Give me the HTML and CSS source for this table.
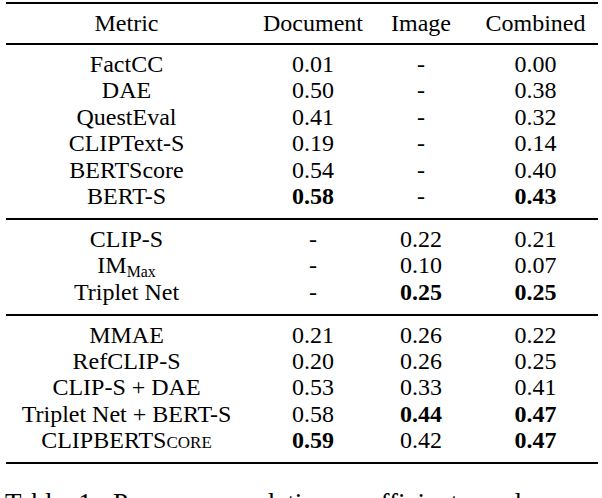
FILE: index.html
```html
<!DOCTYPE html>
<html>
<head>
<meta charset="utf-8">
<link rel="stylesheet" href="styles.css">
</head>
<body>
<div class="tbl">
  <div class="sec head">
    <div>Metric</div><div>Document</div><div>Image</div><div class="c4">Combined</div>
  </div>
  <div class="sec">
    <div>FactCC</div><div>0.01</div><div>-</div><div class="c4">0.00</div>
    <div>DAE</div><div>0.50</div><div>-</div><div class="c4">0.38</div>
    <div>QuestEval</div><div>0.41</div><div>-</div><div class="c4">0.32</div>
    <div>CLIPText-S</div><div>0.19</div><div>-</div><div class="c4">0.14</div>
    <div>BERTScore</div><div>0.54</div><div>-</div><div class="c4">0.40</div>
    <div>BERT-S</div><div><b>0.58</b></div><div>-</div><div class="c4"><b>0.43</b></div>
  </div>
  <div class="sec">
    <div>CLIP-S</div><div>-</div><div>0.22</div><div class="c4">0.21</div>
    <div>IM<sub>Max</sub></div><div>-</div><div>0.10</div><div class="c4">0.07</div>
    <div>Triplet Net</div><div>-</div><div><b>0.25</b></div><div class="c4"><b>0.25</b></div>
  </div>
  <div class="sec">
    <div>MMAE</div><div>0.21</div><div>0.26</div><div class="c4">0.22</div>
    <div>RefCLIP-S</div><div>0.20</div><div>0.26</div><div class="c4">0.25</div>
    <div>CLIP-S + DAE</div><div>0.53</div><div>0.33</div><div class="c4">0.41</div>
    <div>Triplet Net + BERT-S</div><div>0.58</div><div><b>0.44</b></div><div class="c4"><b>0.47</b></div>
    <div><span class="sc">CLIPBERTScore</span></div><div><b>0.59</b></div><div>0.42</div><div class="c4"><b>0.47</b></div>
  </div>
</div>
<p class="caption">Table 1: Pearson correlation coefficients and significance levels between automatic metrics and human judgments.</p>
</body>
</html>
```
FILE: styles.css
```css
html, body {
  margin: 0;
  padding: 0;
  background: #fff;
}
body {
  font-family: "Liberation Serif", "Times New Roman", serif;
  font-size: 24px;
  color: #000;
}
.tbl {
  margin: 2px 0 0 6px;
  width: 592px;
  border-top: 2px solid #000;
}
.sec {
  display: grid;
  grid-template-columns: 241px 132px 84px 1fr;
  grid-auto-rows: 26.4px;
  line-height: 26.4px;
  padding: 6px 0 8.5px;
  border-bottom: 2px solid #000;
  text-align: center;
}
.sec.head {
  padding: 6px 0 6.6px;
}
.sec > div {
  white-space: nowrap;
}
.sec > .c4 {
  padding-left: 10px;
}
b {
  font-weight: bold;
}
sub {
  font-size: 0.66em;
  line-height: 0;
  vertical-align: -0.24em;
}
.sc {
  font-variant: small-caps;
}
.caption {
  margin: 25px 0 0 5px;
  font-size: 27px;
  line-height: 28px;
  word-spacing: 7px;
  width: 593px;
}
```
